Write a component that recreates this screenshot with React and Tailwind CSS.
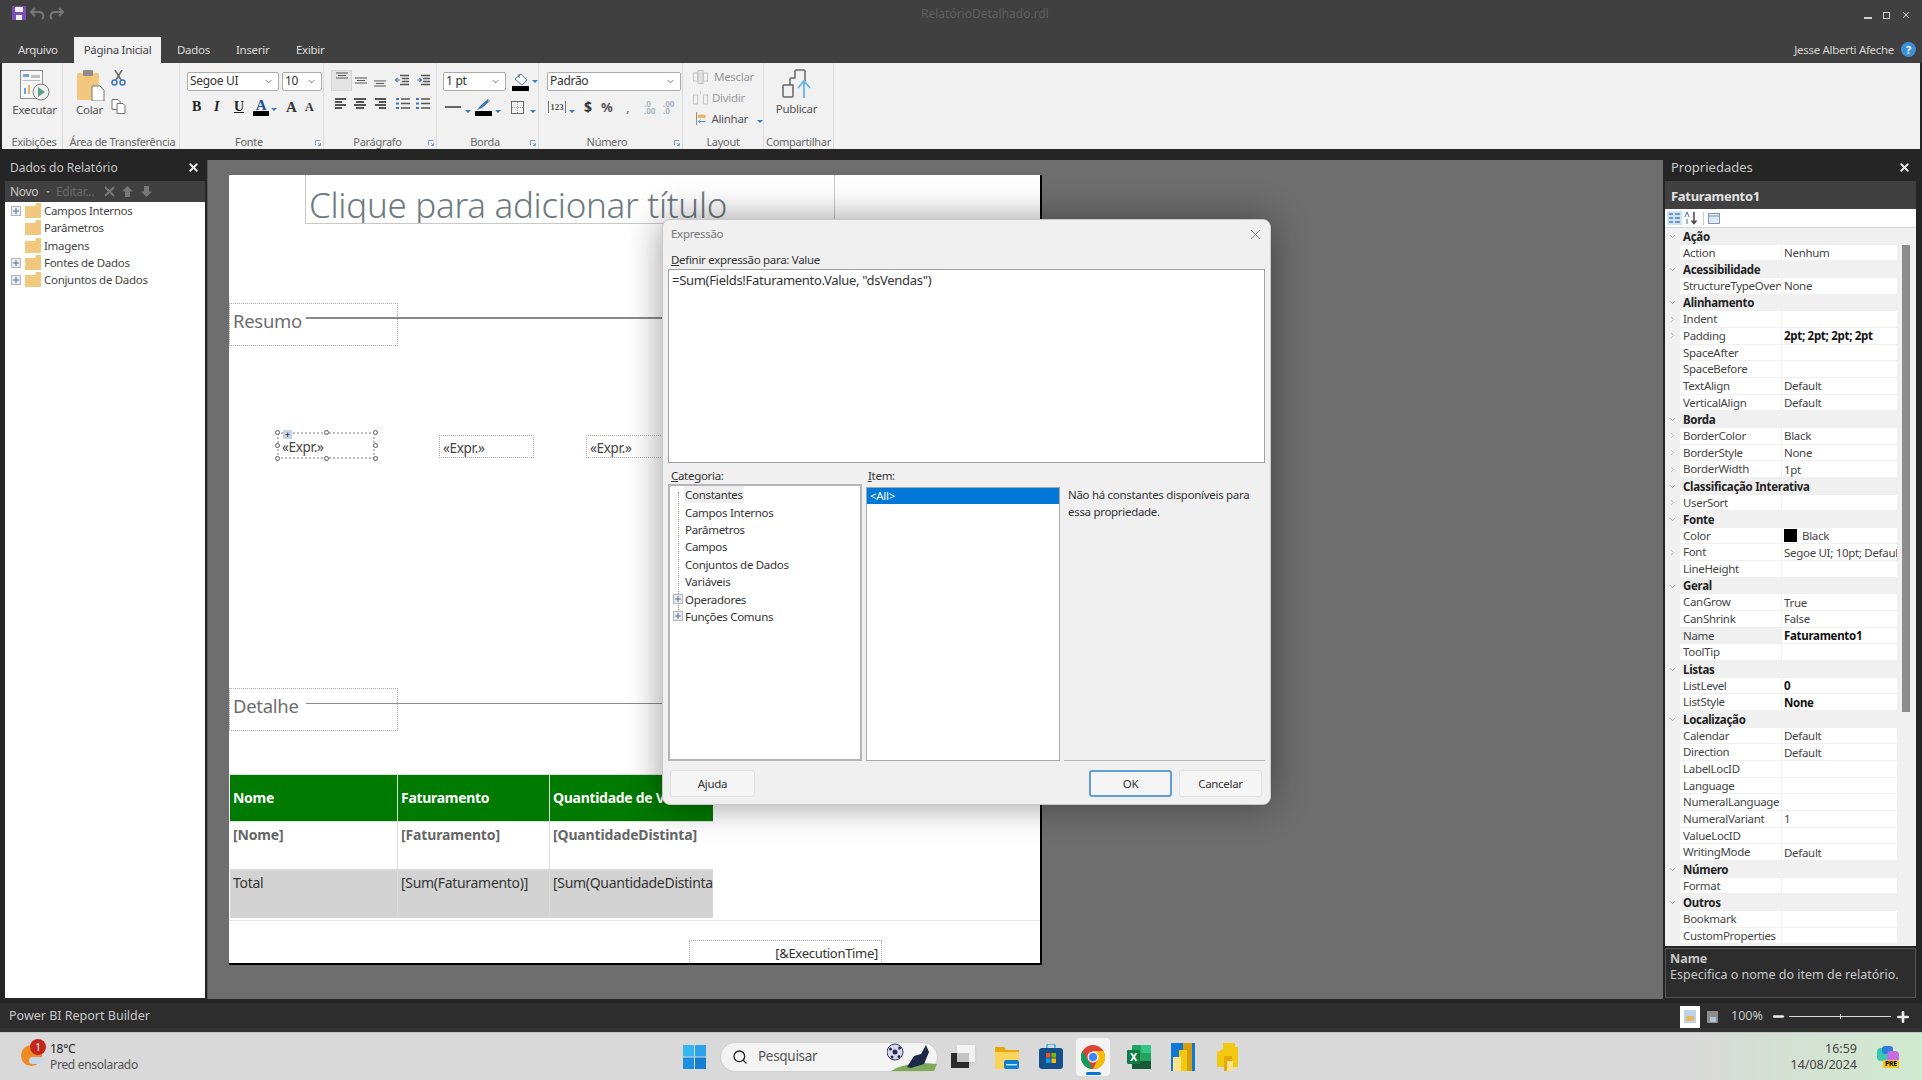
import { X, ChevronRight, ChevronDown, Search, Minus as MinusIcon, Plus } from 'lucide-react';

const groups = [
  { label: 'Exibições', w: 'w-[60px]', pad: 'pl-[3px]' },
  { label: 'Área de Transferência', w: 'w-[117px]', pad: 'pl-[3px]' },
  { label: 'Fonte', w: 'w-[144px]', pad: 'pr-[5px]', launcher: true },
  { label: 'Parágrafo', w: 'w-[113px]', pad: 'pr-[5px]', launcher: true },
  { label: 'Borda', w: 'w-[102px]', pad: 'pr-[5px]', launcher: true },
  { label: 'Número', w: 'w-[144px]', pad: 'pr-[7px]', launcher: true },
  { label: 'Layout', w: 'w-[81px]', pad: '' },
  { label: 'Compartilhar', w: 'w-[70px]', pad: '' },
];

const props = [
  ['Ação', null, 'cat'],
  ['Action', 'Nenhum'],
  ['Acessibilidade', null, 'cat'],
  ['StructureTypeOverwrite', 'None'],
  ['Alinhamento', null, 'cat'],
  ['Indent', '', 'exp'],
  ['Padding', '2pt; 2pt; 2pt; 2pt', 'expb'],
  ['SpaceAfter', ''],
  ['SpaceBefore', ''],
  ['TextAlign', 'Default'],
  ['VerticalAlign', 'Default'],
  ['Borda', null, 'cat'],
  ['BorderColor', 'Black', 'exp'],
  ['BorderStyle', 'None', 'exp'],
  ['BorderWidth', '1pt', 'exp'],
  ['Classificação Interativa', null, 'cat'],
  ['UserSort', '', 'exp'],
  ['Fonte', null, 'cat'],
  ['Color', 'Black', 'color'],
  ['Font', 'Segoe UI; 10pt; Default', 'exp'],
  ['LineHeight', ''],
  ['Geral', null, 'cat'],
  ['CanGrow', 'True'],
  ['CanShrink', 'False'],
  ['Name', 'Faturamento1', 'sel'],
  ['ToolTip', ''],
  ['Listas', null, 'cat'],
  ['ListLevel', '0', 'bold'],
  ['ListStyle', 'None', 'bold'],
  ['Localização', null, 'cat'],
  ['Calendar', 'Default'],
  ['Direction', 'Default'],
  ['LabelLocID', ''],
  ['Language', ''],
  ['NumeralLanguage', ''],
  ['NumeralVariant', '1'],
  ['ValueLocID', ''],
  ['WritingMode', 'Default'],
  ['Número', null, 'cat'],
  ['Format', ''],
  ['Outros', null, 'cat'],
  ['Bookmark', ''],
  ['CustomProperties', ''],
];

const categories = [
  ['Constantes', false, true],
  ['Campos Internos'],
  ['Parâmetros'],
  ['Campos'],
  ['Conjuntos de Dados'],
  ['Variáveis'],
  ['Operadores', true],
  ['Funções Comuns', true],
];

function Folder() {
  return (
    <svg width="16" height="15" viewBox="0 0 16 15">
      <path d="M0 3h10l1-3h5v15H0z" fill="#f2c77e" />
    </svg>
  );
}

function PlusBox() {
  return (
    <svg width="10" height="10" viewBox="0 0 10 10">
      <rect x="0.5" y="0.5" width="9" height="9" fill="#e8edf5" stroke="#b5b5b5" />
      <path d="M2 5h6M5 2v6" stroke="#5c6f8c" />
    </svg>
  );
}

function Arrow() {
  return <span className="inline-block w-0 h-0 border-l-[3px] border-r-[3px] border-t-[3px] border-l-transparent border-r-transparent border-t-[#3b78b8]" />;
}

function Select({ w, children }) {
  return (
    <div className={`${w} h-[19px] bg-white border border-[#ababab] rounded-[2px] flex items-center justify-between pl-[2px] pr-[4px] pb-[1px] text-[12px] text-[#333]`}>
      <span>{children}</span>
      <ChevronDown size={11} color="#777" />
    </div>
  );
}

function LinesIcon({ type }) {
  const rows = {
    left: ['M1 2h11', 'M1 5h7', 'M1 8h11', 'M1 11h7'],
    center: ['M1 2h12', 'M3 5h8', 'M1 8h12', 'M3 11h8'],
    right: ['M2 2h11', 'M6 5h7', 'M2 8h11', 'M6 11h7'],
  };
  return (
    <svg width="14" height="13" viewBox="0 0 14 13" fill="none" stroke="#555" strokeWidth="2">
      {rows[type].map((d) => (
        <path key={d} d={d} />
      ))}
    </svg>
  );
}

function VAlign({ y }) {
  return (
    <svg width="14" height="13" viewBox="0 0 14 13" fill="none" stroke="#555" strokeWidth="1.2">
      <path d={`M1 ${y}h12M3 ${y + 2.5}h8M1 ${y + 5}h12`} />
    </svg>
  );
}

function Indent({ flip }) {
  return (
    <svg width="15" height="13" viewBox="0 0 15 13" fill="none">
      <path d="M5 1.5h9M7 4.5h7M7 7.5h7M5 10.5h9" stroke="#555" strokeWidth="1.5" />
      <path d={flip ? 'M1 6h4M3.5 4l2 2-2 2' : 'M5 6H1M2.5 4l-2 2 2 2'} stroke="#3b78b8" strokeWidth="1.2" />
    </svg>
  );
}

function ListIcon() {
  return (
    <svg width="14" height="13" viewBox="0 0 14 13" fill="none">
      <path d="M5 2h9M5 6.5h9M5 11h9" stroke="#555" strokeWidth="1.5" />
      <path d="M0 2h3M0 6.5h3M0 11h3" stroke="#3b78b8" strokeWidth="2" />
    </svg>
  );
}

function RunGroup() {
  return (
    <div className="flex flex-col items-center pt-[7px] pl-[4px]">
      <svg width="30" height="31" viewBox="0 0 30 31">
        <rect x="0.5" y="0.5" width="22" height="28" fill="#f7f7f7" stroke="#8f8f8f" />
        <rect x="3" y="4" width="6" height="3" fill="#6ea4d6" />
        <rect x="11" y="5" width="9" height="3" fill="#bfbfbf" />
        <rect x="3" y="10" width="17" height="1" fill="#bbb" />
        <rect x="4" y="18" width="2" height="6" fill="#6ea4d6" />
        <rect x="8" y="15" width="2" height="9" fill="#e9b661" />
        <circle cx="21" cy="22" r="8" fill="#eee" stroke="#808080" />
        <path d="M18 17l7 5-7 5z" fill="#5ea08a" />
      </svg>
      <span className="mt-[1px] text-[11.5px] text-[#555] leading-[16px]">Executar</span>
    </div>
  );
}

function Ribbon() {
  const bodies = [
    <RunGroup key="a" />,
    <div key="b" className="flex pt-[7px] pl-[14px] gap-[6px]">
      <div className="flex flex-col items-start">
        <svg width="28" height="31" viewBox="0 0 28 31">
          <rect x="0" y="3" width="22" height="27" rx="1.5" fill="#f2c77e" />
          <rect x="6" y="0" width="10" height="6" rx="1" fill="#8d8d8d" />
          <path d="M15 16h8l4 4v11H15z" fill="#fff" stroke="#777" />
        </svg>
        <span className="mt-[1px] -ml-[1px] text-[11.5px] text-[#555] leading-[16px]">Colar</span>
      </div>
      <div className="flex flex-col gap-[13px]">
        <svg width="15" height="16" viewBox="0 0 15 16" fill="none">
          <path d="M4 0l6 10M11 0L5 10" stroke="#6b6b6b" strokeWidth="1.6" />
          <circle cx="3.5" cy="12.5" r="2.5" stroke="#3b78b8" strokeWidth="1.5" />
          <circle cx="11.5" cy="12.5" r="2.5" stroke="#3b78b8" strokeWidth="1.5" />
        </svg>
        <svg width="15" height="15" viewBox="0 0 15 15" fill="#fff" stroke="#707070">
          <path d="M1 .5h6l2 2v8H1z" />
          <path d="M6 4.5h6l2 2v8H6z" />
        </svg>
      </div>
    </div>,
    <div key="c" className="pt-[9px] pl-[7px]">
      <div className="flex gap-[3px]">
        <Select w="w-[92px]">Segoe UI</Select>
        <Select w="w-[40px]">10</Select>
      </div>
      <div className="flex items-center mt-[8px] h-[16px] text-[#222] font-['Liberation_Serif',serif] text-[14px] font-bold leading-none">
        <span className="w-[12px] ml-[5px]">B</span>
        <span className="w-[20px] ml-[10px] italic">I</span>
        <span className="w-[19px] underline">U</span>
        <span className="w-[16px] flex flex-col items-center text-[#1f4e96] text-[15px]">
          A<span className="w-[16px] h-[5px] bg-black -mt-[2px]" />
        </span>
        <span className="ml-[2px] mr-[9px]"><Arrow /></span>
        <span className="w-[18px] text-[15px] text-[#333]">A</span>
        <span className="ml-[1px] text-[12px] text-[#333]">A</span>
      </div>
    </div>,
    <div key="d" className="pt-[7px] pl-[7px]">
      <div className="flex items-center">
        <span className="w-[21px] h-[21px] bg-[#e3e3e3] border border-[#d5d5d5] flex items-start justify-center pt-[1px]"><VAlign y={1} /></span>
        <span className="ml-[2px]"><VAlign y={4} /></span>
        <span className="ml-[5px]"><VAlign y={7} /></span>
        <span className="ml-[8px]"><Indent /></span>
        <span className="ml-[6px]"><Indent flip /></span>
      </div>
      <div className="flex items-center mt-[6px] ml-[3px]">
        <LinesIcon type="left" />
        <span className="ml-[5px]"><LinesIcon type="center" /></span>
        <span className="ml-[6px]"><LinesIcon type="right" /></span>
        <span className="ml-[9px]"><ListIcon /></span>
        <span className="ml-[6px]"><ListIcon /></span>
      </div>
    </div>,
    <div key="e" className="pt-[9px] pl-[6px]">
      <div className="flex items-center gap-[6px]">
        <Select w="w-[64px]">1 pt</Select>
        <span className="flex items-center gap-[3px]">
          <span className="flex flex-col">
            <svg width="17" height="13" viewBox="0 0 17 13">
              <path d="M3 6l6-5 6 6-5 5z" fill="#fff" stroke="#3b78b8" />
              <path d="M7 1V5" stroke="#555" />
            </svg>
            <span className="w-[17px] h-[5px] bg-black" />
          </span>
          <Arrow />
        </span>
      </div>
      <div className="flex items-center mt-[8px] h-[16px]">
        <span className="w-[16px] h-[2px] bg-[#666] ml-[2px]" />
        <span className="ml-[4px]"><Arrow /></span>
        <span className="ml-[4px] flex flex-col">
          <svg width="17" height="12" viewBox="0 0 17 12">
            <path d="M2 11l3-4 8-7 2 2-8 7z" fill="#3b78b8" />
            <path d="M13 0l2 2-2 1z" fill="#e9b661" />
          </svg>
          <span className="w-[17px] h-[5px] bg-black" />
        </span>
        <span className="ml-[3px]"><Arrow /></span>
        <svg className="ml-[10px]" width="13" height="13" viewBox="0 0 13 13" fill="none" stroke="#666">
          <rect x="0.5" y="0.5" width="12" height="12" />
          <path d="M6.5 1v11M1 6.5h11" strokeDasharray="1 1" stroke="#aaa" />
        </svg>
        <span className="ml-[6px]"><Arrow /></span>
      </div>
    </div>,
    <div key="f" className="pt-[9px] pl-[8px]">
      <Select w="w-[134px]">Padrão</Select>
      <div className="flex items-center mt-[8px] h-[16px] text-[#555] font-bold tracking-normal">
        <span className="w-[18px] h-[12px] border-x border-[#777] text-[9px] leading-[12px] text-center font-['Liberation_Serif',serif] ml-[1px]">123</span>
        <span className="ml-[3px]"><Arrow /></span>
        <span className="ml-[9px] w-[8px] text-[14px] text-[#333] leading-none">$</span>
        <span className="ml-[9px] w-[11px] text-[13px] leading-none">%</span>
        <span className="ml-[14px] w-[4px] text-[13px] text-[#888] leading-none">,</span>
        <span className="ml-[14px] text-[8px] text-[#a9b6c4] leading-[7px] w-[14px]">.0<br />.00</span>
        <span className="ml-[5px] text-[8px] text-[#a9b6c4] leading-[7px] w-[14px]">.00<br />.0</span>
      </div>
    </div>,
    <div key="g" className="pt-[3px] pl-[10px] text-[11.5px] text-[#999] leading-[21px] whitespace-nowrap">
      <div className="flex items-center gap-[6px]">
        <svg width="15" height="14" viewBox="0 0 15 14" fill="none" stroke="#c4c4c4">
          <rect x="0.5" y="3" width="4" height="8" />
          <rect x="10.5" y="3" width="4" height="8" />
          <rect x="5" y="0.5" width="5" height="13" fill="#e2e2e2" />
        </svg>
        Mesclar
      </div>
      <div className="flex items-center gap-[4px]">
        <svg width="15" height="14" viewBox="0 0 15 14" fill="none" stroke="#c4c4c4">
          <rect x="0.5" y="4" width="4" height="9" />
          <rect x="10.5" y="4" width="4" height="9" />
          <path d="M7.5 0v3" />
        </svg>
        Dividir
      </div>
      <div className="flex items-center gap-[5px] text-[#555] ml-[3px]">
        <svg width="12" height="15" viewBox="0 0 12 15">
          <path d="M.5 0v15" stroke="#777" />
          <rect x="2" y="3" width="9" height="4" fill="#e9b661" />
          <path d="M11 11H3M5 9l-2 2 2 2" stroke="#3b78b8" fill="none" />
        </svg>
        Alinhar
        <span className="ml-[4px]"><Arrow /></span>
      </div>
    </div>,
    <div key="h" className="flex flex-col items-center pt-[5px] pr-[4px]">
      <svg width="30" height="32" viewBox="0 0 30 32" fill="none" stroke="#666" strokeWidth="1.5">
        <path d="M1 28V18a1 1 0 0 1 1-1h9v11a1 1 0 0 1-1 1H2a1 1 0 0 1-1-1z" />
        <path d="M8 17v-6a1 1 0 0 1 1-1h4v-7a1 1 0 0 1 1-1h8a1 1 0 0 1 1 1v10" />
        <path d="M22 30V14M16 20l6-7 6 7" stroke="#67b5e8" strokeWidth="1.8" />
      </svg>
      <span className="mt-[1px] text-[11.5px] text-[#555] leading-[16px]">Publicar</span>
    </div>,
  ];

  return (
    <div className="h-[86px] mx-[2px] pl-[1px] bg-[#f1f1f1] flex shrink-0">
      {groups.map((g, i) => (
        <div key={g.label} className={`${g.w} relative flex flex-col border-r border-[#dcdcdc]`}>
          <div className="flex-1 min-h-0">{bodies[i]}</div>
          <div className={`h-[15px] text-center text-[11px] leading-[15px] text-[#666] whitespace-nowrap ${g.pad}`}>{g.label}</div>
          {g.launcher && (
            <svg className="absolute right-[2px] bottom-[3px]" width="6" height="6" viewBox="0 0 6 6" fill="none" stroke="#7a9cc4">
              <path d="M.5 5.5v-5h5M3 3l2.500 2.500M5.500 3v2.500H3" />
            </svg>
          )}
        </div>
      ))}
    </div>
  );
}

function LeftPanel() {
  const items = [
    ['Campos Internos', true],
    ['Parâmetros', false],
    ['Imagens', false],
    ['Fontes de Dados', true],
    ['Conjuntos de Dados', true],
  ];
  return (
    <div className="w-[207px] shrink-0 pl-[5px] pr-[2px] pb-[5px] flex flex-col">
      <div className="h-[32px] shrink-0 flex items-center justify-between pl-[5px] pr-[5px] pt-[5px] text-[12px] tracking-normal text-[#c8c8c8]">
        Dados do Relatório
        <X size={13} strokeWidth={3.5} color="#e8e8e8" />
      </div>
      <div className="h-[21px] shrink-0 bg-[#404040] flex items-center pl-[5px] text-[12px] text-[#c8c8c8] whitespace-nowrap">
        <span className="w-[28px]">Novo</span>
        <span className="ml-[8px] w-0 h-0 border-l-[2px] border-r-[2px] border-t-[2px] border-l-transparent border-r-transparent border-t-[#aaa]" />
        <span className="ml-[6px] w-[37px] text-[#6a6a6a]">Editar...</span>
        <X size={15} strokeWidth={3.5} color="#777" className="ml-[9px]" />
        <svg className="ml-[5px]" width="11" height="11" viewBox="0 0 11 11" fill="#777"><path d="M5.500 0L11 5.500H8V11H3V5.500H0z" /></svg>
        <svg className="ml-[8px]" width="11" height="11" viewBox="0 0 11 11" fill="#777"><path d="M5.500 11L11 5.500H8V0H3v5.500H0z" /></svg>
      </div>
      <div className="flex-1 bg-white">
        {items.map(([name, hasPlus]) => (
          <div key={name} className="h-[17.3px] flex items-center text-[11.5px] text-[#444]">
            <span className="w-[20px] pl-[6px] flex">{hasPlus && <PlusBox />}</span>
            <Folder />
            <span className="ml-[3px]">{name}</span>
          </div>
        ))}
      </div>
    </div>
  );
}

function ExprBox({ className, children }) {
  return (
    <div className={`absolute border border-dotted border-[#aaa] text-[13.5px] text-[#444] pl-[3px] leading-[24px] overflow-hidden ${className}`}>
      {children}
    </div>
  );
}

function Handle({ className }) {
  return <span className={`absolute w-[5px] h-[5px] rounded-full bg-white border border-[#555] ${className}`} />;
}

function ReportPage() {
  return (
    <div className="relative ml-[21px] mt-[15px] w-[813px] h-[790px] bg-white border-r-2 border-b-2 border-black overflow-hidden">
      <div className="absolute left-[76px] top-0 w-[530px] h-[49px] border border-t-0 border-[#c8c8c8] overflow-hidden pl-[3px] text-[35px] font-light text-[#6f7a80] leading-[60px] whitespace-nowrap">
        Clique para adicionar título
      </div>

      <div className="absolute left-0 top-[128px] w-[169px] h-[43px] border border-dotted border-[#aaa] pl-[3px] text-[18.5px] text-[#6e6e6e] leading-[33px]">Resumo</div>
      <div className="absolute left-[77px] top-[142px] w-[600px] h-[2px] bg-[#8a8a8a]" />

      <div className="absolute left-[48px] top-[257px] w-[98px] h-[27px] border-2 border-dotted border-[#bdbdbd] pl-[3px] pt-[2px] text-[13.5px] text-[#444] leading-[22px]">«Expr.»</div>
      <Handle className="left-[46px] top-[255px]" />
      <Handle className="left-[95px] top-[255px]" />
      <Handle className="left-[144px] top-[255px]" />
      <Handle className="left-[46px] top-[268px]" />
      <Handle className="left-[144px] top-[268px]" />
      <Handle className="left-[46px] top-[281px]" />
      <Handle className="left-[95px] top-[281px]" />
      <Handle className="left-[144px] top-[281px]" />
      <span className="absolute left-[54px] top-[255px] w-[9px] h-[9px] bg-[#c5d3e8] flex items-center justify-center text-[9px] leading-none text-black">+</span>

      <ExprBox className="left-[210px] top-[260px] w-[95px] h-[23px]">«Expr.»</ExprBox>
      <ExprBox className="left-[357px] top-[260px] w-[95px] h-[23px]">«Expr.»</ExprBox>

      <div className="absolute left-0 top-[513px] w-[169px] h-[43px] border border-dotted border-[#aaa] pl-[3px] text-[18.5px] text-[#6e6e6e] leading-[33px]">Detalhe</div>
      <div className="absolute left-[77px] top-[528px] w-[600px] h-[1px] bg-[#8a8a8a]" />

      <div className="absolute left-[1px] top-[599px] w-[483px] grid grid-cols-[167px_151px_163px] grid-rows-[46px_47px_48px] bg-[#dcdcdc] gap-px text-[14px] pt-px">
        <div className="bg-[#007a00] text-white font-bold pl-[3px] leading-[46px]">Nome</div>
        <div className="bg-[#007a00] text-white font-bold pl-[3px] leading-[46px]">Faturamento</div>
        <div className="bg-[#007a00] text-white font-bold pl-[3px] leading-[46px] whitespace-nowrap overflow-hidden">Quantidade de Vendas</div>
        <div className="bg-white text-[#666] font-bold pl-[3px] pt-[2px] tracking-[-0.15px]">[Nome]</div>
        <div className="bg-white text-[#666] font-bold pl-[3px] pt-[2px] tracking-[-0.15px]">[Faturamento]</div>
        <div className="bg-white text-[#666] font-bold pl-[3px] pt-[2px] tracking-[-0.15px] whitespace-nowrap">[QuantidadeDistinta]</div>
        <div className="bg-[#d3d3d3] text-[#333] pl-[3px] pt-[2px]">Total</div>
        <div className="bg-[#d3d3d3] text-[#333] pl-[3px] pt-[2px] whitespace-nowrap">[Sum(Faturamento)]</div>
        <div className="bg-[#d3d3d3] text-[#333] pl-[3px] pt-[2px] whitespace-nowrap overflow-hidden">[Sum(QuantidadeDistinta)]</div>
      </div>

      <div className="absolute left-0 top-[745px] w-full h-[1px] bg-[#e6e6e6]" />
      <div className="absolute left-[460px] top-[765px] w-[193px] h-[30px] border border-dotted border-[#aaa] text-right pr-[3px] text-[13px] text-[#333] leading-[24px]">[&amp;ExecutionTime]</div>
    </div>
  );
}

function RightPanel() {
  return (
    <div className="w-[251px] shrink-0 ml-[2px] pb-[5px] flex flex-col">
      <div className="h-[32px] shrink-0 flex items-center justify-between pl-[6px] pr-[5px] pt-[5px] text-[13px] tracking-normal text-[#c8c8c8]">
        Propriedades
        <X size={13} strokeWidth={3.5} color="#e8e8e8" />
      </div>
      <div className="h-[28px] shrink-0 bg-[#404040] flex items-center pl-[6px] pt-[3px] text-[13px] font-bold text-[#e4e4e4]">Faturamento1</div>
      <div className="h-[18px] shrink-0 bg-white flex items-center pl-[2px] gap-[2px]">
        <svg width="15" height="14" viewBox="0 0 15 14"><rect width="15" height="14" fill="#cce4f7" /><path d="M2 3h4M2 7h4M2 11h4M8 3h5M8 7h5M8 11h5" stroke="#5b7e9e" strokeWidth="1.5" /></svg>
        <svg width="15" height="14" viewBox="0 0 15 14" fill="none"><path d="M1 6l2-5 2 5M3 8v5" stroke="#3b78b8" /><path d="M10 1v11M7.500 9.500l2.500 3 2.500-3" stroke="#444" strokeWidth="1.5" /></svg>
        <span className="w-px h-[13px] bg-[#ccc] mx-[2px]" />
        <svg width="12" height="12" viewBox="0 0 12 12"><rect x="0.5" y="1.5" width="11" height="10" fill="#dde7f2" stroke="#7f98b5" /><path d="M1 4h10" stroke="#7f98b5" /></svg>
      </div>
      <div className="h-[1px] bg-[#d6d6d6]" />
      <div className="flex-1 min-h-0 flex bg-[#f0f0f0]">
        <div className="w-[232px]">
          {props.map(([name, value, kind]) =>
            kind === 'cat' ? (
              <div key={name} className="h-[16.67px] flex items-center bg-[#f0f0f0] text-[11.5px] font-bold text-[#222] whitespace-nowrap">
                <span className="w-[18px] pl-[3px]"><ChevronDown size={9} color="#888" /></span>
                {name}
              </div>
            ) : (
              <div key={name} className="h-[16.67px] flex items-center text-[11.5px] border-b border-[#f0f0f0]">
                <span className="w-[15px] pl-[3px]">
                  {(kind === 'exp' || kind === 'expb') && <ChevronRight size={9} color="#aaa" />}
                </span>
                <span className={`w-[102px] h-full pl-[3px] border-r border-[#f0f0f0] text-[#444] leading-[15px] overflow-hidden whitespace-nowrap ${kind === 'sel' ? 'bg-[#f0f0f0]' : 'bg-white'}`}>{name}</span>
                <span className={`flex-1 h-full bg-white pl-[2px] leading-[15px] overflow-hidden whitespace-nowrap flex items-center ${kind === 'bold' || kind === 'expb' || kind === 'sel' ? 'font-bold text-[#111]' : 'text-[#444]'}`}>
                  {kind === 'color' && <span className="w-[13px] h-[13px] bg-black mr-[5px]" />}
                  {value}
                </span>
              </div>
            )
          )}
        </div>
        <div className="w-[19px] pl-[5px] pt-[17px]">
          <div className="w-[8px] h-[467px] bg-[#8c8c8c]" />
        </div>
      </div>
      <div className="h-[50px] shrink-0 mt-[2px] bg-[#2d2d2d] border border-[#555] pl-[4px] pt-[2px] text-[12.5px] leading-[16px] tracking-normal text-[#c8c8c8]">
        <div className="font-bold">Name</div>
        <div>Especifica o nome do item de relatório.</div>
      </div>
    </div>
  );
}

function Dialog() {
  return (
    <div className="absolute left-[662px] top-[219px] w-[609px] h-[586px] rounded-[8px] bg-[#f0f0f0] border border-[#c9c9c9] shadow-[0_0_36px_rgba(0,0,0,0.4)] flex flex-col px-[5px] text-[11.5px] text-[#333]">
      <div className="h-[30px] shrink-0 flex items-center justify-between pl-[3px] pr-[1px] pb-[2px] text-[#777]">
        Expressão
        <X size={17} strokeWidth={1} color="#666" />
      </div>
      <div className="h-[19px] shrink-0 pl-[3px] leading-[20px]"><u>D</u>efinir expressão para: Value</div>
      <div className="h-[194px] shrink-0 bg-white border border-[#a0a0a0] pl-[3px] pt-[1px] text-[13px] leading-[18px] text-[#333]">=Sum(Fields!Faturamento.Value, "dsVendas")</div>
      <div className="h-[21px] shrink-0 flex items-start pt-[5px] leading-[16px]">
        <span className="w-[200px] pl-[3px]"><u>C</u>ategoria:</span>
        <span><u>I</u>tem:</span>
      </div>
      <div className="h-[277px] shrink-0 flex gap-[4px]">
        <div className="w-[194px] bg-white border-2 border-[#b5b5b5] relative">
          <span className="absolute left-[8px] top-[6px] h-[120px] border-l border-dotted border-[#999]" />
          {categories.map(([name, plus, active]) => (
            <div key={name} className="h-[17.4px] flex items-center relative">
              <span className="w-[14px] pl-[3px] flex relative z-10">{plus && <PlusBox />}</span>
              <span className={`px-[1px] leading-[17px] ${active ? 'bg-[#f0f0f0]' : ''}`}>{name}</span>
            </div>
          ))}
        </div>
        <div className="w-[194px] mt-[3px] bg-white border border-[#a8a8a8]">
          <div className="h-[16px] bg-[#0078d7] text-white pl-[3px] leading-[16px]">&lt;All&gt;</div>
        </div>
        <div className="flex-1 mt-[3px] pl-[4px] pr-[8px] border-b border-[#b5b5b5] leading-[16.5px]">
          Não há constantes disponíveis para essa propriedade.
        </div>
      </div>
      <div className="flex-1 flex items-start pt-[9px] pl-[2px] pr-[3px] justify-between">
        <div className="w-[85px] h-[27px] bg-[#f5f5f5] border border-[#e2e2e2] rounded-[3px] flex items-center justify-center">Ajuda</div>
        <div className="flex gap-[7px]">
          <div className="w-[83px] h-[27px] bg-[#f5f5f5] border-2 border-[#5d9fd6] rounded-[3px] flex items-center justify-center">OK</div>
          <div className="w-[83px] h-[27px] bg-[#f5f5f5] border border-[#e2e2e2] rounded-[3px] flex items-center justify-center">Cancelar</div>
        </div>
      </div>
    </div>
  );
}

function StatusBar() {
  return (
    <div className="h-[29px] shrink-0 flex flex-col bg-[#333]">
      <div className="h-[25px] bg-[#2d2d2d] flex items-center pl-[9px] pr-[11px] pt-[2px] text-[12.5px] tracking-normal text-[#c8c8c8]">
        <span className="flex-1">Power BI Report Builder</span>
        <span className="w-[20px] h-[22px] bg-white flex items-center justify-center">
          <svg width="12" height="13" viewBox="0 0 12 13"><rect width="12" height="13" fill="#bcd3ea" /><rect x="2" y="6" width="8" height="5" fill="#e9b661" /></svg>
        </span>
        <svg className="ml-[7px]" width="11" height="12" viewBox="0 0 11 12"><rect width="11" height="12" fill="#8d8d8d" /><rect x="3" y="6" width="6" height="5" fill="#aac4dd" /></svg>
        <span className="ml-[13px] w-[29px] text-[12.5px]">100%</span>
        <MinusIcon size={15} strokeWidth={4} color="#eee" className="ml-[11px]" />
        <span className="ml-[3px] relative w-[102px] h-[1px] bg-[#ddd]">
          <span className="absolute left-[51px] -top-[2px] w-[1px] h-[5px] bg-[#ddd]" />
        </span>
        <Plus size={16} strokeWidth={4} color="#eee" className="ml-[4px]" />
      </div>
    </div>
  );
}

function Taskbar() {
  return (
    <div className="h-[48px] shrink-0 relative flex items-center bg-[linear-gradient(90deg,#d9d9d9_0%,#d9d9d9_88%,#cfeacf_100%)] border-t border-[#c4c4c4] text-[12px]">
      <div className="relative ml-[21px] w-[24px] h-[24px]">
        <span className="absolute left-0 top-0 w-[21px] h-[21px] rounded-full bg-[#f08a24]" />
        <span className="absolute left-[8px] top-[12px] w-[14px] h-[7px] rounded-full bg-[#c7d6ea]" />
        <span className="absolute left-[9px] -top-[6px] w-[16px] h-[16px] rounded-full bg-[#c4261d] text-white text-[10px] leading-[16px] text-center">1</span>
      </div>
      <div className="ml-[5px] w-[88px] leading-[16px] whitespace-nowrap">
        <div className="text-[#222]">18°C</div>
        <div className="text-[#555]">Pred ensolarado</div>
      </div>

      <svg className="ml-[545px]" width="23" height="24" viewBox="0 0 23 24">
        <rect width="11" height="11.5" fill="#38b6f0" />
        <rect x="12" width="11" height="11.5" fill="#2aa3ea" />
        <rect y="12.5" width="11" height="11.5" fill="#1d8fdf" />
        <rect x="12" y="12.5" width="11" height="11.5" fill="#167fd4" />
      </svg>

      <div className="ml-[14px] w-[218px] h-[30px] rounded-full bg-[#f3f3f3] border border-[#cfcfcf] flex items-center pl-[11px] text-[13.5px] text-[#555]">
        <Search size={16} color="#222" />
        <span className="ml-[10px] flex-1">Pesquisar</span>
        <svg width="50" height="28" viewBox="0 0 50 28">
          <path d="M4 28c10-7 30-9 46-7l-3 7z" fill="#7ea85a" />
          <circle cx="8" cy="9" r="8" fill="#d8d8f0" stroke="#3a3a5a" />
          <circle cx="8" cy="9" r="2.500" fill="#2d2d55" />
          <circle cx="3.500" cy="6" r="1.500" fill="#2d2d55" />
          <circle cx="12.500" cy="5" r="1.500" fill="#2d2d55" />
          <circle cx="5" cy="14" r="1.500" fill="#2d2d55" />
          <circle cx="12" cy="13.500" r="1.500" fill="#2d2d55" />
          <path d="M20 24l7-11 7-2 5-9 3 7-5 12-13 4z" fill="#1c2a48" />
        </svg>
      </div>

      <div className="ml-[13px] relative w-[24px] h-[24px]">
        <span className="absolute left-0 top-[8px] w-[18px] h-[15px] bg-[#2b2b2b]" />
        <span className="absolute left-[6px] top-0 w-[18px] h-[17px] bg-[#f2f2f2] shadow-sm" />
        <span className="absolute left-[6px] top-[8px] w-[12px] h-[9px] bg-[#c4c4c4]" />
      </div>

      <svg className="ml-[20px]" width="24" height="24" viewBox="0 0 24 24">
        <path d="M0 2h9l2 3h13v19H0z" fill="#e8a80c" />
        <path d="M0 7h24v17H0z" fill="#fbd45d" />
        <rect x="9" y="15" width="15" height="9" rx="2" fill="#0f7fd0" />
        <rect x="11" y="19" width="11" height="1.5" fill="#bfe3fa" />
      </svg>

      <svg className="ml-[20px]" width="24" height="25" viewBox="0 0 24 25">
        <path d="M8 5V2a2 2 0 0 1 2-2h4a2 2 0 0 1 2 2v3" fill="none" stroke="#2bb4e8" strokeWidth="1.5" />
        <rect y="4" width="24" height="21" rx="3" fill="#154f8a" />
        <rect x="7" y="9" width="4.5" height="4.5" fill="#f25022" />
        <rect x="12.5" y="9" width="4.5" height="4.5" fill="#7fba00" />
        <rect x="7" y="14.5" width="4.5" height="4.5" fill="#00a4ef" />
        <rect x="12.5" y="14.5" width="4.5" height="4.5" fill="#ffb900" />
      </svg>

      <div className="ml-[13px] w-[34px] h-[38px] rounded-[4px] bg-[#f3f3f3] flex flex-col items-center pt-[7px] relative">
        <svg width="24" height="24" viewBox="0 0 24 24">
          <circle cx="12" cy="12" r="12" fill="#db4437" />
          <path d="M12 24A12 12 0 0 1 1.6 6L7 15.5 12 24z" fill="#0f9d58" />
          <path d="M12 24a12 12 0 0 0 10.400-18H12l4.500 9z" fill="#fbbc04" />
          <circle cx="12" cy="12" r="5.5" fill="#fff" />
          <circle cx="12" cy="12" r="4.3" fill="#4285f4" />
        </svg>
        <span className="absolute bottom-[1px] w-[15px] h-[3px] rounded-full bg-[#0078d7]" />
      </div>

      <svg className="ml-[17px]" width="24" height="24" viewBox="0 0 24 24">
        <rect x="5" width="19" height="24" rx="1" fill="#21a366" />
        <rect x="14" width="10" height="8" fill="#33c481" />
        <rect x="5" y="16" width="19" height="8" fill="#185c37" />
        <rect y="5" width="13" height="14" rx="1" fill="#107c41" />
        <text x="6.5" y="16" textAnchor="middle" fontSize="11" fontWeight="700" fill="#fff">X</text>
      </svg>

      <svg className="ml-[20px]" width="24" height="28" viewBox="0 0 24 28">
        <rect width="24" height="28" fill="#0f78d4" />
        <rect x="12" width="9" height="28" fill="#d69d0f" />
        <rect x="8" y="7" width="8" height="21" fill="#f2c811" />
        <rect x="2" y="14" width="8" height="14" fill="#fbe28b" />
      </svg>

      <svg className="ml-[22px]" width="21" height="28" viewBox="0 0 21 28">
        <path d="M6 0h12v4h3v20H0V9l6-3z" fill="#f2c811" />
        <rect x="7" y="13" width="8" height="15" fill="#e8a80c" />
        <rect x="10" y="18" width="6" height="10" fill="#fbe28b" />
      </svg>

      <div className="flex-1" />
      <div className="text-right leading-[16px] text-[#444] mr-[20px] text-[12.5px] tracking-normal">
        <div>16:59</div>
        <div>14/08/2024</div>
      </div>
      <div className="relative w-[22px] h-[22px] mr-[23px]">
        <span className="absolute left-0 top-[2px] w-[11px] h-[13px] rounded-[4px] bg-[#37c8b0]" />
        <span className="absolute left-[5px] top-0 w-[11px] h-[8px] rounded-[3px] bg-[#2f7de0]" />
        <span className="absolute right-0 top-[5px] w-[12px] h-[11px] rounded-[4px] bg-[#c66ce0]" />
        <span className="absolute left-[6px] bottom-0 w-[16px] h-[8px] bg-[#f5c518] text-[7px] leading-[8px] font-bold text-center text-black">PRE</span>
      </div>
    </div>
  );
}

export default function App() {
  return (
    <div className="relative w-[1922px] h-[1080px] overflow-hidden flex flex-col bg-[#252525] tracking-[-0.3px] font-['Noto_Sans','Liberation_Sans',sans-serif]">
      <div className="h-[37px] shrink-0 bg-[#404040] relative flex items-start pt-[6px] pl-[12px] gap-[4px]">
        <svg width="14" height="14" viewBox="0 0 14 14">
          <rect width="14" height="14" fill="#7a4fb5" />
          <rect x="3" y="1" width="8" height="5" fill="#eee" />
          <rect x="4" y="9" width="6" height="5" fill="#eee" />
        </svg>
        <svg width="15" height="14" viewBox="0 0 15 14" fill="none" stroke="#777" strokeWidth="2"><path d="M5 2L1 6l4 4M1 6h8a4 4 0 0 1 3 7" /></svg>
        <svg width="15" height="14" viewBox="0 0 15 14" fill="none" stroke="#777" strokeWidth="2"><path d="M10 2l4 4-4 4M14 6H6a4 4 0 0 0-3 7" /></svg>
        <span className="absolute left-[921px] top-[5px] text-[12px] tracking-normal text-[#5e5e5e]">RelatórioDetalhado.rdl</span>
        <span className="absolute right-[11px] top-[10px] flex items-center gap-[11px] text-[#d0d0d0]">
          <span className="w-[8px] h-[2px] bg-[#d0d0d0] mt-[6px]" />
          <span className="w-[7px] h-[7px] border border-[#d0d0d0]" />
          <X size={10} strokeWidth={2.5} />
        </span>
      </div>

      <div className="h-[26px] shrink-0 bg-[#404040] flex text-[11.5px] text-[#dcdcdc] leading-[26px] relative whitespace-nowrap">
        <span className="ml-[18px] w-[37px]">Arquivo</span>
        <span className="ml-[19px] w-[87px] bg-[#f1f1f1] text-[#444] text-center">Página Inicial</span>
        <span className="ml-[16px] w-[32px]">Dados</span>
        <span className="ml-[27px] w-[32px]">Inserir</span>
        <span className="ml-[28px] w-[26px]">Exibir</span>
        <span className="ml-auto mr-[7px] text-[#d4d4d4]">Jesse Alberti Afeche</span>
        <span className="w-[15px] h-[15px] mt-[5px] mr-[6px] rounded-full bg-[#3d8fd8] text-white font-bold text-[11px] leading-[15px] text-center">?</span>
      </div>

      <Ribbon />

      <div className="h-[854px] shrink-0 flex">
        <LeftPanel />
        <div className="flex-1 min-w-0 mt-[11px] mb-[4px] bg-[#6e6e6e] border-l border-[#555] overflow-hidden">
          <ReportPage />
        </div>
        <RightPanel />
        <div className="w-[6px]" />
      </div>

      <StatusBar />
      <Taskbar />
      <Dialog />
    </div>
  );
}
